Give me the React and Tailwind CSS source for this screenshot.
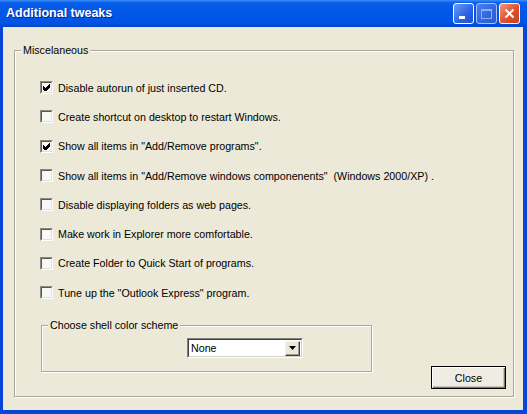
import React from 'react';

const options = [
  { label: 'Disable autorun of just inserted CD.', checked: true },
  { label: 'Create shortcut on desktop to restart Windows.', checked: false },
  { label: 'Show all items in "Add/Remove programs".', checked: true },
  { label: 'Show all items in "Add/Remove windows componenents"  (Windows 2000/XP) .', checked: false },
  { label: 'Disable displaying folders as web pages.', checked: false },
  { label: 'Make work in Explorer more comfortable.', checked: false },
  { label: 'Create Folder to Quick Start of programs.', checked: false },
  { label: 'Tune up the "Outlook Express" program.', checked: false },
];

function CheckBox({ checked }) {
  return (
    <div className="w-[13px] h-[13px] shrink-0 border border-t-[#8c8a80] border-l-[#8c8a80] border-b-white border-r-white">
      <div className="w-full h-full bg-[#f8f8f4] border border-t-[#5a5850] border-l-[#5a5850] border-b-[#e2e0d6] border-r-[#e2e0d6] flex items-center justify-center">
        {checked && (
          <svg width="7" height="7" viewBox="0 0 7 7">
            <path d="M0 2.5 L2.5 5 L7 0.5 M0 3.5 L2.5 6 L7 1.5 M0 4.5 L2.5 7 L7 2.5" stroke="#000" strokeWidth="1" fill="none" shapeRendering="crispEdges" />
          </svg>
        )}
      </div>
    </div>
  );
}

function GroupBox({ title, className, children }) {
  return (
    <div className={`relative border border-[#aca899] shadow-[1px_1px_0_#fff,inset_1px_1px_0_#fff] ${className}`}>
      <span className="absolute -top-[8px] left-[6px] px-[2px] bg-[#ece9d8] text-[10.7px] leading-[14px] text-black">{title}</span>
      {children}
    </div>
  );
}

export default function App() {
  return (
    <div className="w-[527px] h-[414px] flex flex-col bg-[#0846d8] font-['Liberation_Sans',Arial,sans-serif] select-none overflow-hidden">
      {/* title bar */}
      <div className="h-[27px] shrink-0 flex items-center justify-between pl-[6px] pr-[7px] bg-[linear-gradient(to_bottom,#3d8ff8_0%,#0a5eea_10%,#0058e8_45%,#0054e3_85%,#0044cc_100%)]">
        <span className="text-white font-bold text-[12.5px] [text-shadow:1px_1px_0_#0a1e8a]">Additional tweaks</span>
        <div className="flex gap-[2px]">
          <div className="w-[21px] h-[21px] rounded-[3px] border border-white bg-[linear-gradient(135deg,#6a9cf5,#2a62e6_60%,#1f4fd0)] flex items-end pl-[5px] pb-[4px]">
            <div className="w-[6px] h-[3px] bg-white" />
          </div>
          <div className="w-[21px] h-[21px] rounded-[3px] border border-[#a8c0f0] bg-[linear-gradient(135deg,#4c82ee,#2f66e0_60%,#2a5ad6)] flex items-center justify-center">
            <div className="w-[11px] h-[10px] border border-[#8fb0f0] border-t-[2px]" />
          </div>
          <div className="w-[21px] h-[21px] rounded-[3px] border border-white bg-[linear-gradient(135deg,#f09a7c,#e0502a_55%,#c8401c)] flex items-center justify-center">
            <svg width="11" height="11" viewBox="0 0 11 11">
              <path d="M1.5 1.5 L9.5 9.5 M9.5 1.5 L1.5 9.5" stroke="#fff" strokeWidth="2" />
            </svg>
          </div>
        </div>
      </div>

      {/* body */}
      <div className="flex-1 mx-[3px] mr-[4px] mb-[4px] bg-[#ece9d8] pt-[23px] pl-[11px] pr-[9px] pb-[13px] flex">
        <GroupBox title="Miscelaneous" className="flex-1 flex flex-col pl-[25px] pr-[7px] pt-[22px]">
          {options.map((o) => (
            <div key={o.label} className="h-[29.3px] flex items-center gap-[5px]">
              <CheckBox checked={o.checked} />
              <span className="text-[10.7px] text-black whitespace-pre">{o.label}</span>
            </div>
          ))}
          <div className="flex justify-between items-start mt-[18px]">
            <GroupBox title="Choose shell color scheme" className="ml-[1px] w-[331px] h-[47px] pl-[145px] pt-[12px]">
              <div className="w-[116px] h-[20px] border border-t-[#808080] border-l-[#808080] border-b-white border-r-white">
                <div className="w-full h-full bg-white border border-t-[#404040] border-l-[#404040] border-b-[#d4d0c8] border-r-[#d4d0c8] flex items-center justify-between pl-[2px] pr-[1px]">
                  <span className="text-[10.7px] text-black">None</span>
                  <div className="w-[15px] h-[15px] bg-[#ece9d8] border border-t-[#f4f2ea] border-l-[#f4f2ea] border-b-[#404040] border-r-[#404040] shadow-[inset_-1px_-1px_0_#a09c8c] flex items-center justify-center">
                    <svg width="7" height="4" viewBox="0 0 7 4">
                      <path d="M0 0 H7 L3.5 4 Z" fill="#000" />
                    </svg>
                  </div>
                </div>
              </div>
            </GroupBox>
            <button className="mt-[41px] w-[75px] h-[23px] border border-black bg-[#efede3] shadow-[inset_1px_1px_0_#fff,inset_-1px_-1px_0_#7a7868,inset_-2px_-2px_0_#c8c4b4] text-[10.7px] text-black">
              Close
            </button>
          </div>
        </GroupBox>
      </div>
    </div>
  );
}
